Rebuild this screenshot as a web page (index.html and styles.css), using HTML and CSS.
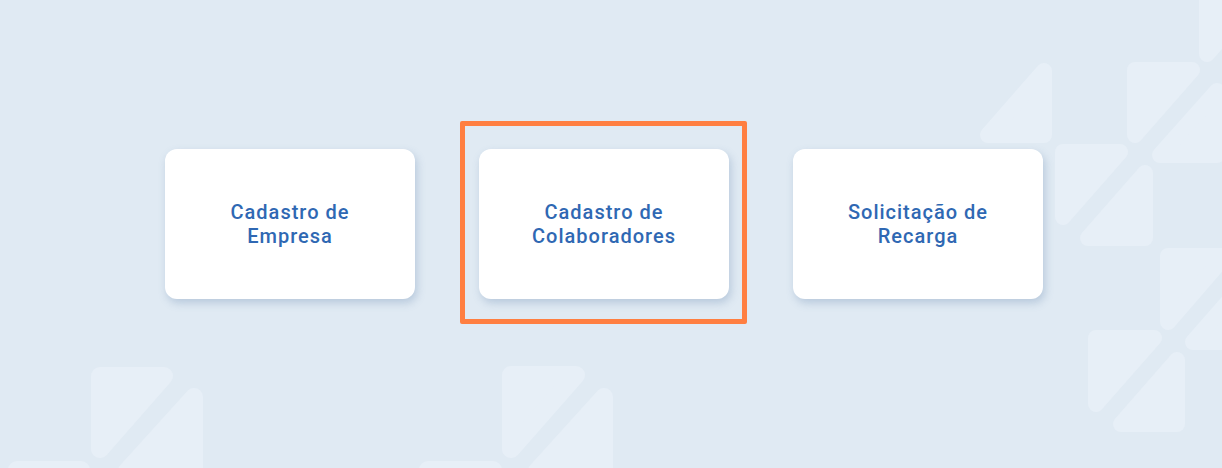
FILE: index.html
```html
<!DOCTYPE html>
<html>
<head>
  <title>Cadastros</title>
  <link rel="stylesheet" href="styles.css">
</head>
<body>
  <svg class="backdrop" width="1222" height="468" viewBox="0 0 1222 468">
    <g class="tiles-small">
      <polygon points="1044,71 1044,135 988,135"/>
      <polygon points="1135,70 1192,70 1135,135"/>
      <polygon points="1217,91 1217,155 1160,155"/>
      <polygon points="1063,152 1120,152 1063,217"/>
      <polygon points="1145,173 1145,238 1088,238"/>
      <polygon points="1207,-11 1264,-11 1207,54"/>
      <polygon points="1168,256 1225,256 1168,322"/>
      <polygon points="1250,277 1250,342 1193,342"/>
      <polygon points="1096,338 1154,338 1096,404"/>
      <polygon points="1177,360 1177,424 1121,424"/>
    </g>
    <g class="tiles-large">
      <polygon points="100,376 164,376 100,449"/>
      <polygon points="194,397 194,471 127,471"/>
      <polygon points="511,375 576,375 511,449"/>
      <polygon points="604,397 604,471 537,471"/>
      <polygon points="17,470 81,470 17,544"/>
      <polygon points="428,470 493,470 428,544"/>
    </g>
  </svg>

  <div class="menu">
    <a class="card" href="#">Cadastro de<br>Empresa</a>
    <div class="card-wrap">
      <a class="card" href="#">Cadastro de<br>Colaboradores</a>
      <div class="highlight"></div>
    </div>
    <a class="card" href="#">Solicitação de<br>Recarga</a>
  </div>
</body>
</html>
```

FILE: styles.css
```css
body {
  margin: 0;
  height: 468px;
  overflow: hidden;
  position: relative;
  background-color: #e0eaf3;
  font-family: Roboto, "Liberation Sans", sans-serif;
}

.backdrop {
  position: absolute;
  top: 0;
  left: 0;
  z-index: 0;
}

.backdrop polygon {
  fill: #e7eff7;
  stroke: #e7eff7;
  stroke-linejoin: round;
}

.tiles-small polygon {
  stroke-width: 16;
}

.tiles-large polygon {
  stroke-width: 18;
}

.menu {
  position: relative;
  z-index: 1;
  display: flex;
  justify-content: center;
  gap: 64px;
  padding-top: 149px;
  padding-right: 14px;
}

.card-wrap {
  position: relative;
}

.card {
  display: flex;
  align-items: center;
  justify-content: center;
  width: 250px;
  height: 150px;
  background-color: #fff;
  border-radius: 12px;
  box-shadow: 2px 4px 9px rgba(80, 115, 160, 0.28);
  color: #2f68b3;
  font-size: 20px;
  font-weight: 500;
  line-height: 24px;
  letter-spacing: 1px;
  text-align: center;
  text-decoration: none;
}

.highlight {
  position: absolute;
  top: -28px;
  left: -19px;
  width: 287px;
  height: 203px;
  box-sizing: border-box;
  border: 5px solid #ff7f41;
  border-radius: 2px;
  pointer-events: none;
}
```
